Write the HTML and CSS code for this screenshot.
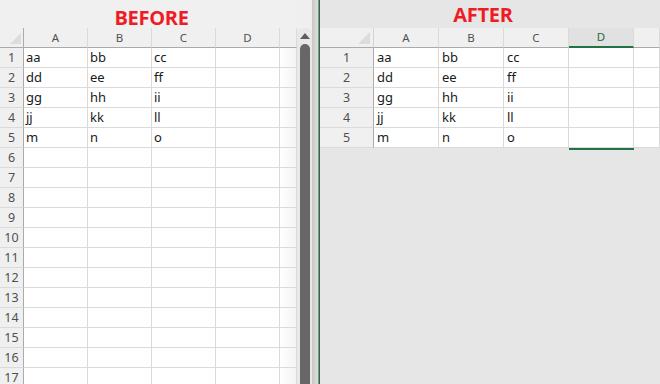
FILE: index.html
```html
<!DOCTYPE html>
<html>
<head>
<meta charset="utf-8">
<link rel="stylesheet" href="styles.css">
</head>
<body>
<div class="page">
  <section class="panel before">
    <div class="title-bar"><h1 class="title">BEFORE</h1></div>
    <div class="sheet-wrap">
      <div class="grid grid-before">
        <div class="corner"><span class="tri"></span></div>
        <div class="ch">A</div><div class="ch">B</div><div class="ch">C</div><div class="ch">D</div><div class="ch edge"></div>

        <div class="rh">1</div><div class="c">aa</div><div class="c">bb</div><div class="c">cc</div><div class="c"></div><div class="c edge"></div>
        <div class="rh">2</div><div class="c">dd</div><div class="c">ee</div><div class="c">ff</div><div class="c"></div><div class="c edge"></div>
        <div class="rh">3</div><div class="c">gg</div><div class="c">hh</div><div class="c">ii</div><div class="c"></div><div class="c edge"></div>
        <div class="rh">4</div><div class="c">jj</div><div class="c">kk</div><div class="c">ll</div><div class="c"></div><div class="c edge"></div>
        <div class="rh">5</div><div class="c">m</div><div class="c">n</div><div class="c">o</div><div class="c"></div><div class="c edge"></div>
        <div class="rh">6</div><div class="c"></div><div class="c"></div><div class="c"></div><div class="c"></div><div class="c edge"></div>
        <div class="rh">7</div><div class="c"></div><div class="c"></div><div class="c"></div><div class="c"></div><div class="c edge"></div>
        <div class="rh">8</div><div class="c"></div><div class="c"></div><div class="c"></div><div class="c"></div><div class="c edge"></div>
        <div class="rh">9</div><div class="c"></div><div class="c"></div><div class="c"></div><div class="c"></div><div class="c edge"></div>
        <div class="rh">10</div><div class="c"></div><div class="c"></div><div class="c"></div><div class="c"></div><div class="c edge"></div>
        <div class="rh">11</div><div class="c"></div><div class="c"></div><div class="c"></div><div class="c"></div><div class="c edge"></div>
        <div class="rh">12</div><div class="c"></div><div class="c"></div><div class="c"></div><div class="c"></div><div class="c edge"></div>
        <div class="rh">13</div><div class="c"></div><div class="c"></div><div class="c"></div><div class="c"></div><div class="c edge"></div>
        <div class="rh">14</div><div class="c"></div><div class="c"></div><div class="c"></div><div class="c"></div><div class="c edge"></div>
        <div class="rh">15</div><div class="c"></div><div class="c"></div><div class="c"></div><div class="c"></div><div class="c edge"></div>
        <div class="rh">16</div><div class="c"></div><div class="c"></div><div class="c"></div><div class="c"></div><div class="c edge"></div>
        <div class="rh">17</div><div class="c"></div><div class="c"></div><div class="c"></div><div class="c"></div><div class="c edge"></div>
      </div>
    </div>
  </section>
  <div class="scrollbar">
    <div class="track">
      <span class="arrow"></span>
      <div class="thumb"></div>
    </div>
    <div class="track-side"></div>
  </div>
  <div class="divider"></div>
  <section class="panel after">
    <div class="title-bar"><h1 class="title">AFTER</h1></div>
    <div class="grid grid-after">
      <div class="corner"><span class="tri"></span></div>
      <div class="ch">A</div><div class="ch">B</div><div class="ch">C</div><div class="ch sel">D</div><div class="ch"></div>

      <div class="rh">1</div><div class="c">aa</div><div class="c">bb</div><div class="c">cc</div><div class="c"></div><div class="c"></div>
      <div class="rh">2</div><div class="c">dd</div><div class="c">ee</div><div class="c">ff</div><div class="c"></div><div class="c"></div>
      <div class="rh">3</div><div class="c">gg</div><div class="c">hh</div><div class="c">ii</div><div class="c"></div><div class="c"></div>
      <div class="rh">4</div><div class="c">jj</div><div class="c">kk</div><div class="c">ll</div><div class="c"></div><div class="c"></div>
      <div class="rh">5</div><div class="c">m</div><div class="c">n</div><div class="c">o</div><div class="c last-d"></div><div class="c"></div>
    </div>
  </section>
</div>
</body>
</html>
```

FILE: styles.css
```css
* { box-sizing: border-box; margin: 0; padding: 0; }
html, body { width: 660px; height: 384px; overflow: hidden; }
body { background: #e6e6e6; font-family: "Noto Sans", "Open Sans", sans-serif; }

.page { display: flex; height: 384px; }

.panel { display: flex; flex-direction: column; overflow: hidden; }
.before { width: 297px; background: #f0f0f0; }
.after { flex: 1; background: #e6e6e6; }

.title-bar { height: 28px; flex-shrink: 0; display: flex; justify-content: center; align-items: flex-end; }
.title {
  font-family: "Open Sans", sans-serif;
  font-weight: 700;
  font-size: 20px;
  line-height: 20px;
  color: #ee1c25;
  letter-spacing: -0.3px;
}
.before .title { padding-left: 6px; }
.after .title-bar { align-items: flex-start; padding-top: 5px; padding-right: 14px; }

.sheet-wrap { flex-shrink: 0; }
.grid { display: grid; grid-auto-rows: 20px; flex-shrink: 0; }
.grid-before { grid-template-columns: 24px 64px 64px 64px 64px 17px; }
.grid-after { grid-template-columns: 54px 65px 65px 65px 65px 26px; }

.corner {
  background: #f0f0f0;
  border-right: 1px solid #ababab;
  border-bottom: 1px solid #ababab;
  position: relative;
}
.grid-after .corner { border-right: 1px solid #d4d4d4; border-bottom: 1px solid #ababab; }
.tri {
  position: absolute; right: 3px; bottom: 3px;
  width: 0; height: 0;
  border-left: 12px solid transparent;
  border-bottom: 12px solid #dcdcdc;
}
.grid-before .tri { border-left-width: 11px; border-bottom-width: 11px; right: 2px; }

.ch {
  background: #f0f0f0;
  border-right: 1px solid #dadada;
  border-bottom: 1px solid #ababab;
  font-size: 11.5px;
  color: #505050;
  text-align: center;
  line-height: 19px;
}
.ch.sel { background: #e1e1e1; color: #1e6b40; border-bottom: 2px solid #217346; line-height: 18px; }

.rh {
  background: #f0f0f0;
  border-right: 1px solid #ababab;
  border-bottom: 1px solid #dadada;
  font-size: 12.5px;
  color: #505050;
  text-align: center;
  line-height: 20px;
}

.c {
  background: #fff;
  border-right: 1px solid #dadada;
  border-bottom: 1px solid #dadada;
  font-size: 13px;
  color: #1a1a1a;
  padding-left: 2px;
  line-height: 19px;
}
.grid-after .c { padding-left: 3px; }
.c.edge { background: linear-gradient(to right, #ffffff, #f3f3f3); }
.c.last-d { box-shadow: 0 2px 0 #217346; }

.scrollbar { width: 21px; background: #efefef; display: flex; }
.track {
  width: 15px;
  display: flex; flex-direction: column; align-items: center;
  margin-top: 28px;
  background: #e8e8e8;
  border-radius: 6px 6px 0 0;
  padding-left: 1px;
}
.arrow {
  margin-top: 5px;
  width: 0; height: 0;
  border-left: 5px solid transparent;
  border-right: 5px solid transparent;
  border-bottom: 6px solid #5e5e5e;
}
.thumb {
  margin-top: 5px;
  width: 10px; flex: 1;
  background: #676767;
  border-radius: 5px 5px 0 0;
}
.track-side { flex: 1; background: linear-gradient(to right, #c8c8c8, #dedede); }
.divider { width: 2px; background: #217346; border-left: 1px solid #8a8a8a; }
```
